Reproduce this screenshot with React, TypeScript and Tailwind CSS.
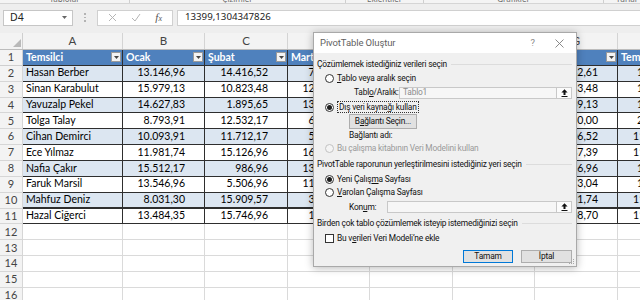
import React from 'react';

type DataRow = { name: string; vals: string[] };

const COLS = [
  { key: 'A', w: 100, title: 'Temsilci' },
  { key: 'B', w: 82, title: 'Ocak' },
  { key: 'C', w: 83, title: 'Şubat' },
  { key: 'D', w: 82, title: 'Mart' },
  { key: 'E', w: 83, title: 'Nisan' },
  { key: 'F', w: 82, title: 'Mayıs' },
  { key: 'G', w: 83, title: 'Haziran' },
  { key: 'H', w: 82, title: 'Temmuz' },
];

const ROWS: DataRow[] = [
  { name: 'Hasan Berber', vals: ['13.146,96', '14.416,52', '7.520,43', '9.213,04', '12.604,35', '10.482,61', '1.806,09'] },
  { name: 'Sinan Karabulut', vals: ['15.979,13', '10.823,48', '12.398,70', '6.431,30', '8.902,17', '14.113,48', '1.275,65'] },
  { name: 'Yavuzalp Pekel', vals: ['14.627,83', '1.895,65', '13.275,22', '11.046,52', '5.318,26', '9.669,13', '1.942,17'] },
  { name: 'Tolga Talay', vals: ['8.793,91', '12.532,17', '6.114,78', '15.387,83', '7.721,74', '12.750,00', '2.364,78'] },
  { name: 'Cihan Demirci', vals: ['10.093,91', '11.712,17', '5.862,61', '13.590,43', '10.145,22', '7.906,52', '11.218,26'] },
  { name: 'Ece Yılmaz', vals: ['11.981,74', '15.126,96', '16.043,48', '4.862,17', '14.336,09', '15.487,39', '11.590,87'] },
  { name: 'Nafia Çakır', vals: ['15.512,17', '986,96', '13.921,74', '9.275,65', '6.684,35', '11.256,96', '1.847,83'] },
  { name: 'Faruk Marsil', vals: ['13.546,96', '5.506,96', '11.607,83', '12.003,48', '15.771,30', '6.673,04', '1.693,91'] },
  { name: 'Mahfuz Deniz', vals: ['8.031,30', '15.909,57', '3.752,17', '7.448,70', '13.062,61', '13.221,74', '11.735,65'] },
  { name: 'Hazal Ciğerci', vals: ['13.484,35', '15.746,96', '1.928,26', '14.519,13', '9.387,83', '9.908,70', '11.104,35'] },
];

const ROW_H = 'h-[15.86px]';

function Radio({ checked, disabled }: { checked?: boolean; disabled?: boolean }) {
  return (
    <span
      className={`flex h-[9px] w-[9px] shrink-0 items-center justify-center rounded-full border ${
        disabled ? 'border-[#c2c2c2] bg-[#f4f4f4]' : 'border-[#333333] bg-white'
      }`}
    >
      {checked && <span className="h-[5px] w-[5px] rounded-full bg-[#1e1e1e]" />}
    </span>
  );
}

function GroupHeader({ children, h }: { children: React.ReactNode; h: string }) {
  return (
    <div className={`flex ${h} items-center gap-[4px] pr-[4px]`}>
      <span className="whitespace-nowrap">{children}</span>
      <span className="h-px flex-1 bg-[#dcdcdc]" />
    </div>
  );
}

function PickerButton() {
  return (
    <span className="flex h-full w-[15px] shrink-0 items-center justify-center border-l border-[#c8c8c8] bg-[#fbfbfb]">
      <svg width="7" height="8" viewBox="0 0 7 8">
        <path d="M3.5 0.3 L6.6 3.6 H4.5 V6 H2.5 V3.6 H0.4 Z" fill="#111" />
        <rect x="0.5" y="7" width="6" height="1" fill="#111" />
      </svg>
    </span>
  );
}

function Dropdown() {
  return (
    <span className="flex h-[10px] w-[10px] shrink-0 items-center justify-center border border-[#9a9a9a] bg-[#f3f3f3]">
      <svg width="5" height="3" viewBox="0 0 5 3">
        <path d="M0 0 H5 L2.5 3 Z" fill="#444" />
      </svg>
    </span>
  );
}

function Sheet() {
  const table = 'border-[#2e2e2e]';
  return (
    <div className="flex w-max flex-col font-['Lato',sans-serif]">
      {/* column letters */}
      <div className="flex h-[17px] border-b border-[#bcbcbc] bg-[#f3f3f3]">
        <div className="relative w-[23px] shrink-0 border-r border-[#cfcfcf]">
          <svg className="absolute bottom-[2px] right-[1px]" width="8" height="8" viewBox="0 0 8 8">
            <path d="M8 0 V8 H0 Z" fill="#b9b9b9" />
          </svg>
        </div>
        {COLS.map((c) => (
          <div
            key={c.key}
            style={{ width: c.w }}
            className="flex shrink-0 items-center justify-center border-r border-[#d4d4d4] text-[11.5px] text-[#444]"
          >
            {c.key}
          </div>
        ))}
      </div>

      {/* header row 1 */}
      <div className={`flex ${ROW_H}`}>
        <div className="flex w-[23px] shrink-0 items-center justify-center border-r border-b border-[#cfcfcf] bg-[#f3f3f3] text-[11px] text-[#444]">
          1
        </div>
        {COLS.map((c) => (
          <div
            key={c.key}
            style={{ width: c.w }}
            className={`flex shrink-0 items-center justify-between border-r border-b ${table} bg-[#4f81bd] pl-[3px] pr-[1px] text-[10.5px] font-bold text-white`}
          >
            <span className="whitespace-nowrap">{c.title}</span>
            <Dropdown />
          </div>
        ))}
      </div>

      {/* data rows */}
      {ROWS.map((r, i) => {
        const n = i + 2;
        const band = n % 2 === 0 ? 'bg-[#dce6f1]' : 'bg-white';
        const bottom = n === 10 ? 'border-b-2' : 'border-b';
        const last = r.vals[r.vals.length - 1];
        return (
          <div key={n} className={`flex ${ROW_H}`}>
            <div className="flex w-[23px] shrink-0 items-center justify-center border-r border-b border-[#d6d6d6] bg-[#f3f3f3] text-[11px] text-[#444]">
              {n}
            </div>
            <div
              style={{ width: COLS[0].w }}
              className={`flex shrink-0 items-center border-r ${bottom} ${table} ${band} pl-[3px] text-[10.5px] text-black`}
            >
              <span className="whitespace-nowrap">{r.name}</span>
            </div>
            {r.vals.slice(0, -1).map((v, j) => (
              <div
                key={j}
                style={{ width: COLS[j + 1].w }}
                className={`flex shrink-0 items-center justify-end border-r ${bottom} ${table} ${band} pr-[19px] text-[10.5px] text-black`}
              >
                <span className="whitespace-nowrap">{v}</span>
              </div>
            ))}
            {/* column H: only the first digits peek in at the window edge */}
            <div
              style={{ width: COLS[7].w }}
              className={`flex shrink-0 items-center border-r ${bottom} ${table} ${band} ${
                last.length > 8 ? 'pl-[15px]' : 'pl-[19px]'
              } text-[10.5px] text-black`}
            >
              <span className="whitespace-nowrap">{last}</span>
            </div>
          </div>
        );
      })}

      {/* empty rows */}
      {[12, 13, 14, 15, 16].map((n) => (
        <div key={n} className={`flex ${ROW_H}`}>
          <div className="flex w-[23px] shrink-0 items-center justify-center border-r border-b border-[#d6d6d6] bg-[#f3f3f3] text-[11px] text-[#444]">
            {n}
          </div>
          {COLS.map((c) => (
            <div key={c.key} style={{ width: c.w }} className="shrink-0 border-r border-b border-[#dadada]" />
          ))}
        </div>
      ))}
    </div>
  );
}

function FormulaBar() {
  return (
    <div className="flex flex-col bg-[#eeeeee]">
      {/* bottom edge of ribbon */}
      <div className="flex h-[4px] overflow-hidden border-b border-[#d5d5d5] bg-[#f4f4f4] font-['Noto_Sans',sans-serif] text-[8px] leading-[8px] text-[#6b6b6b]">
        <div className="flex w-[130px] justify-center border-r border-[#cfcfcf]"><span className="-mt-[5px]">Tablolar</span></div>
        <div className="flex w-[216px] justify-center border-r border-[#cfcfcf]"><span className="-mt-[5px]">Çizimler</span></div>
        <div className="flex w-[78px] justify-center border-r border-[#cfcfcf]"><span className="-mt-[5px]">Eklentiler</span></div>
        <div className="flex w-[180px] justify-center border-r border-[#cfcfcf]"><span className="-mt-[5px]">Grafikler</span></div>
        <div className="flex flex-1 justify-center pl-[10px]"><span className="-mt-[5px]">Turlar</span></div>
      </div>
      <div className="flex h-[28px] items-center gap-[4px] pl-[3px] pt-[2px] pb-[3px]">
        <div className="flex h-[16px] w-[70px] items-center justify-between border border-[#c6c6c6] bg-white pl-[6px] pr-[5px] font-['Noto_Sans',sans-serif] text-[10.5px] text-[#222]">
          <span>D4</span>
          <svg width="5" height="3" viewBox="0 0 5 3">
            <path d="M0 0 H5 L2.5 3 Z" fill="#666" />
          </svg>
        </div>
        <div className="flex w-[16px] flex-col items-center gap-[2px]">
          <span className="h-[1.5px] w-[1.5px] bg-[#b3b3b3]" />
          <span className="h-[1.5px] w-[1.5px] bg-[#b3b3b3]" />
          <span className="h-[1.5px] w-[1.5px] bg-[#b3b3b3]" />
        </div>
        <div className="flex h-[16px] w-[76px] items-center justify-around border border-[#d0d0d0] bg-white px-[3px]">
          <svg width="9" height="9" viewBox="0 0 9 9">
            <path d="M1 1 L8 8 M8 1 L1 8" stroke="#b5b5b5" strokeWidth="1" />
          </svg>
          <svg width="10" height="9" viewBox="0 0 10 9">
            <path d="M1 5 L4 8 L9 1" stroke="#b5b5b5" strokeWidth="1" fill="none" />
          </svg>
          <span className="font-['Liberation_Serif',serif] text-[11px] italic text-[#555]">
            f<span className="text-[8px]">x</span>
          </span>
        </div>
        <div className="flex h-[16px] flex-1 items-center border border-r-0 border-[#d0d0d0] bg-white pl-[7px] font-['Noto_Sans',sans-serif] text-[9.7px] text-[#222]">
          13399,1304347826
        </div>
      </div>
    </div>
  );
}

function Dialog() {
  return (
    <div className="absolute left-[313px] top-[32px] flex h-[235px] w-[264px] flex-col border border-[#a9a9a9] bg-[#f0f0f0] font-['Roboto',sans-serif] text-[8.4px] tracking-[-0.2px] text-[#111111] shadow-[0_1px_8px_rgba(0,0,0,0.28)]">
      <div className="flex h-[20px] shrink-0 items-center bg-white pl-[6px] pr-[12px] text-[9.5px] tracking-[-0.1px] text-[#5f5f5f]">
        <span className="flex-1">PivotTable Oluştur</span>
        <span className="mr-[20px] text-[9.5px] text-[#8a8a8a]">?</span>
        <svg width="9" height="9" viewBox="0 0 9 9">
          <path d="M0.5 0.5 L8.5 8.5 M8.5 0.5 L0.5 8.5" stroke="#7d7d7d" strokeWidth="0.9" />
        </svg>
      </div>

      <div className="relative flex flex-1 flex-col pl-[3px] pt-[4px]">
        <GroupHeader h="h-[14px]">Çözümlemek istediğiniz verileri seçin</GroupHeader>

        <div className="flex h-[14px] items-center gap-[3px] pl-[8px]">
          <Radio />
          <span>
            <u>T</u>ablo veya aralık seçin
          </span>
        </div>

        <div className="flex h-[15px] items-center pl-[37px] pr-[4px]">
          <span className="w-[45px] shrink-0 whitespace-nowrap">
            Tabl<u>o</u>/Aralık:
          </span>
          <div className="flex h-[12px] flex-1 items-center border border-[#c8c8c8] bg-[#f6f6f6]">
            <span className="flex-1 pl-[3px] text-[#8c8c8c]">Tablo1</span>
            <PickerButton />
          </div>
        </div>

        <div className="flex h-[14px] items-center gap-[3px] pl-[8px]">
          <Radio checked />
          <span className="border border-dotted border-[#333] px-[1px] leading-[10px]">
            Dış veri kayna<u>ğ</u>ı kullan
          </span>
        </div>

        <div className="flex h-[15px] pl-[32px]">
          <span className="flex h-full w-[68px] items-center justify-center border border-[#adadad] bg-[#e1e1e1]">
            B<u>a</u>ğlantı Seçin...
          </span>
        </div>

        <div className="flex h-[12px] items-center pl-[32px]">Bağlantı adı:</div>

        <div className="flex h-[14px] items-center gap-[3px] pl-[8px] text-[#9a9a9a]">
          <Radio disabled />
          <span>Bu çalışma kitabının Veri Modelini kullan</span>
        </div>

        <GroupHeader h="h-[18px]">PivotTable raporunun yerleştirilmesini istediğiniz yeri seçin</GroupHeader>

        <div className="flex h-[12px] items-center gap-[3px] pl-[8px]">
          <Radio checked />
          <span>
            Yeni Çalış<u>m</u>a Sayfası
          </span>
        </div>

        <div className="flex h-[14px] items-center gap-[3px] pl-[8px]">
          <Radio />
          <span>
            <u>V</u>arolan Çalışma Sayfası
          </span>
        </div>

        <div className="flex h-[16px] items-center pl-[32px] pr-[4px]">
          <span className="w-[38px] shrink-0">
            Kon<u>u</u>m:
          </span>
          <div className="flex h-[12px] flex-1 items-center border border-[#c8c8c8] bg-[#f6f6f6]">
            <span className="flex-1" />
            <PickerButton />
          </div>
        </div>

        <GroupHeader h="h-[16px]">Birden çok tablo çözümlemek isteyip istemediğinizi seçin</GroupHeader>

        <div className="flex h-[14px] items-center gap-[3px] pl-[8px]">
          <span className="h-[9px] w-[9px] shrink-0 border border-[#333] bg-white" />
          <span>
            Bu v<u>e</u>rileri Veri Modeli’ne ekle
          </span>
        </div>

        <div className="mt-[5px] flex h-[13px] justify-end gap-[8px] pr-[4px]">
          <span className="flex h-full w-[50px] items-center justify-center border border-[#0078d7] bg-[#e1e1e1]">
            Tamam
          </span>
          <span className="flex h-full w-[51px] items-center justify-center border border-[#adadad] bg-[#e1e1e1]">
            İptal
          </span>
        </div>

        <svg className="absolute bottom-[1px] right-[1px]" width="8" height="8" viewBox="0 0 8 8">
          <g fill="#a8a8a8">
            <rect x="6" y="2" width="1" height="1" />
            <rect x="4" y="4" width="1" height="1" />
            <rect x="6" y="4" width="1" height="1" />
            <rect x="2" y="6" width="1" height="1" />
            <rect x="4" y="6" width="1" height="1" />
            <rect x="6" y="6" width="1" height="1" />
          </g>
        </svg>
      </div>
    </div>
  );
}

export default function App() {
  return (
    <div className="relative h-[300px] w-[640px] overflow-hidden bg-white">
      <FormulaBar />
      <div className="h-[1px] bg-[#eeeeee]" />
      <Sheet />
      <Dialog />
    </div>
  );
}
